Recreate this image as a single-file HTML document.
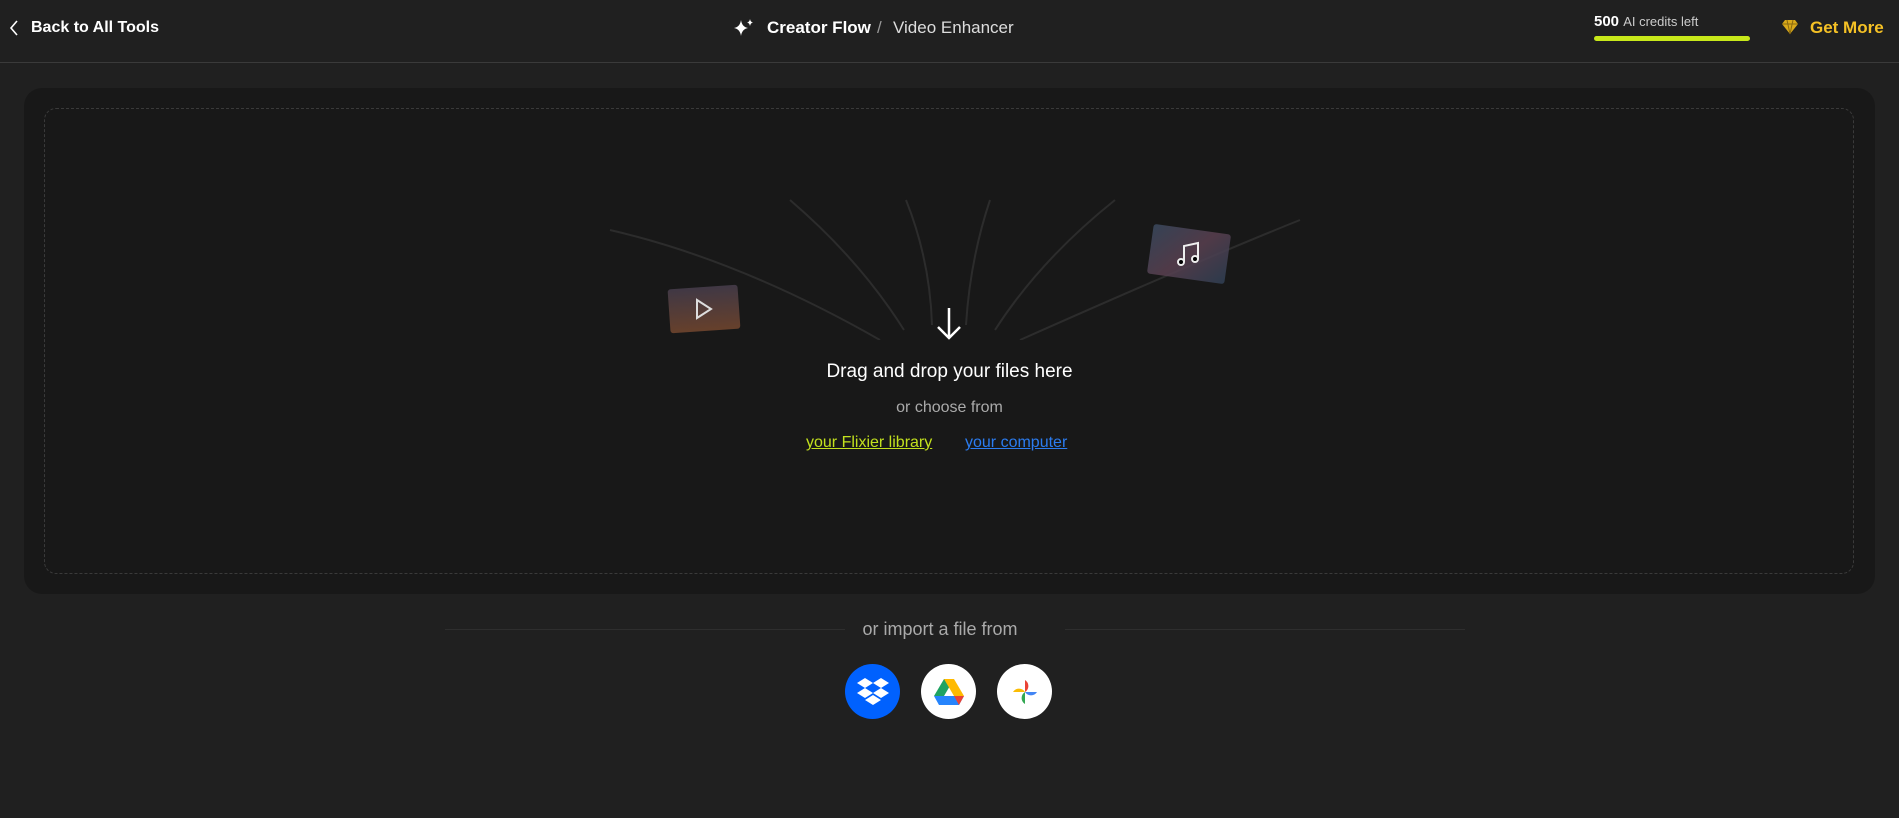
<!DOCTYPE html>
<html><head><meta charset="utf-8"><style>
*{margin:0;padding:0;box-sizing:border-box}
body{width:1899px;height:818px;background:#202020;font-family:"Liberation Sans",sans-serif;color:#fff;position:relative;overflow:hidden}
.hdr{position:absolute;left:0;top:0;width:1899px;height:63px;border-bottom:1px solid #3a3a3a}
.t{position:absolute;white-space:nowrap}
.panel{position:absolute;left:24px;top:88px;width:1851px;height:506px;background:#181818;border-radius:18px}
.dash{position:absolute;left:44px;top:108px;width:1810px;height:466px;border:1px dashed #3a3a3a;border-radius:12px}
.circ{position:absolute;width:55px;height:55px;border-radius:50%;top:664px;display:flex;align-items:center;justify-content:center}
</style></head><body>
<div class="hdr">
<svg class="t" style="left:8px;top:19px" width="12" height="18" viewBox="0 0 12 18"><path d="M9 2L3 9l6 7" stroke="#fff" stroke-width="1.6" fill="none"/></svg>
<div class="t" style="left:31px;top:19px;font-size:16px;font-weight:bold">Back to All Tools</div>
<svg class="t" style="left:733px;top:17px" width="22" height="22" viewBox="0 0 22 22"><path d="M8 3 Q9 10 15 11 Q9 12 8 19 Q7 12 1 11 Q7 10 8 3Z" fill="#fff"/><path d="M17 2 Q17.5 5 20 5.5 Q17.5 6 17 9 Q16.5 6 14 5.5 Q16.5 5 17 2Z" fill="#fff"/></svg>
<div class="t" style="left:767px;top:18px;font-size:17px;font-weight:bold">Creator Flow</div>
<div class="t" style="left:877px;top:18px;font-size:17px;color:#999">/</div>
<div class="t" style="left:893px;top:18px;font-size:17px;color:#ddd">Video Enhancer</div>
<div class="t" style="left:1594px;top:13px;font-size:15px"><b>500</b> <span style="color:#ccc;font-size:13px">AI credits left</span></div>
<div class="t" style="left:1594px;top:36px;width:156px;height:5px;border-radius:3px;background:#c8e81a"></div>
<svg class="t" style="left:1781px;top:19px" width="18" height="16" viewBox="0 0 18 16"><path d="M4 1h10l3 4-8 10-8-10z" fill="#d9a91a"/><path d="M1 5h16M6 1l3 14 3-14" stroke="#8a6a10" stroke-width="1" fill="none"/></svg>
<div class="t" style="left:1810px;top:18px;font-size:17px;font-weight:bold;color:#f5c125">Get More</div>
</div>
<div class="panel"></div>
<div class="dash"></div>
<svg class="t" style="left:600px;top:180px" width="720" height="160" viewBox="0 0 720 160" fill="none" stroke="#2c2c2c" stroke-width="2">
<path d="M10 50 Q140 80 280 160"/><path d="M190 20 Q260 80 304 150"/><path d="M306 20 Q330 80 332 145"/><path d="M390 20 Q370 80 366 145"/><path d="M515 20 Q440 80 395 150"/><path d="M700 40 Q600 80 420 160"/>
</svg>
<div class="t" style="left:669px;top:287px;width:70px;height:44px;transform:rotate(-4deg);background:linear-gradient(#4a4050,#7a4a30);border-radius:3px;opacity:.8"></div>
<svg class="t" style="left:694px;top:298px" width="20" height="22" viewBox="0 0 20 22"><path d="M3 2l14 9-14 9z" stroke="#ddd" stroke-width="2" fill="none"/></svg>
<div class="t" style="left:1150px;top:229px;width:78px;height:50px;transform:rotate(8deg);background:linear-gradient(135deg,#3a4a60,#5a4050,#2f4055);border-radius:3px;opacity:.85"></div>
<svg class="t" style="left:1176px;top:240px" width="26" height="28" viewBox="0 0 26 28"><path d="M8 22V6l14-3v16" stroke="#eee" stroke-width="2" fill="none"/><circle cx="5" cy="22" r="3" stroke="#eee" stroke-width="2"/><circle cx="19" cy="19" r="3" stroke="#eee" stroke-width="2"/></svg>
<svg class="t" style="left:935px;top:306px" width="28" height="36" viewBox="0 0 28 36"><path d="M14 2v30M3 21l11 11 11-11" stroke="#fff" stroke-width="2.5" fill="none"/></svg>
<div class="t" style="left:0;width:1899px;text-align:center;top:361px;font-size:19px">Drag and drop your files here</div>
<div class="t" style="left:0;width:1899px;text-align:center;top:399px;font-size:16px;color:#aaa">or choose from</div>
<div class="t" style="left:806px;top:434px;font-size:16px;color:#c2e01e;text-decoration:underline">your Flixier library</div>
<div class="t" style="left:965px;top:434px;font-size:16px;color:#2b7cf0;text-decoration:underline">your computer</div>
<div class="t" style="left:445px;top:629px;width:400px;height:1px;background:#2e2e2e"></div>
<div class="t" style="left:1065px;top:629px;width:400px;height:1px;background:#2e2e2e"></div>
<div class="t" style="left:0;width:1880px;text-align:center;top:619px;font-size:18px;color:#aaa">or import a file from</div>
<div class="circ" style="left:845px;background:#0061fe"><svg width="34" height="30" viewBox="0 0 34 30" fill="#fff"><path d="M9 1l8 5-8 5-8-5zM25 1l8 5-8 5-8-5zM1 16l8-5 8 5-8 5zM33 16l-8-5-8 5 8 5zM9 23l8-5 8 5-8 5z"/></svg></div>
<div class="circ" style="left:921px;background:#fff"><svg width="34" height="30" viewBox="0 0 34 30"><path d="M12 2h10L12 19H2z" fill="#1ea362"/><path d="M22 2l10 17h-10L12 2z" fill="#ffba00"/><path d="M2 19h30l-5 9H7z" fill="#2684fc"/><path d="M22 19h10l-5 9z" fill="#ea4335"/></svg></div>
<div class="circ" style="left:997px;background:#fff"><svg width="30" height="30" viewBox="0 0 30 30"><path d="M15 15V3a7 7 0 0 1 0 12z" fill="#ea4335"/><path d="M15 15h12a7 7 0 0 1-12 0z" fill="#4285f4"/><path d="M15 15v12a7 7 0 0 1 0-12z" fill="#34a853"/><path d="M15 15H3a7 7 0 0 1 12 0z" fill="#fbbc04"/></svg></div>
</body></html>
